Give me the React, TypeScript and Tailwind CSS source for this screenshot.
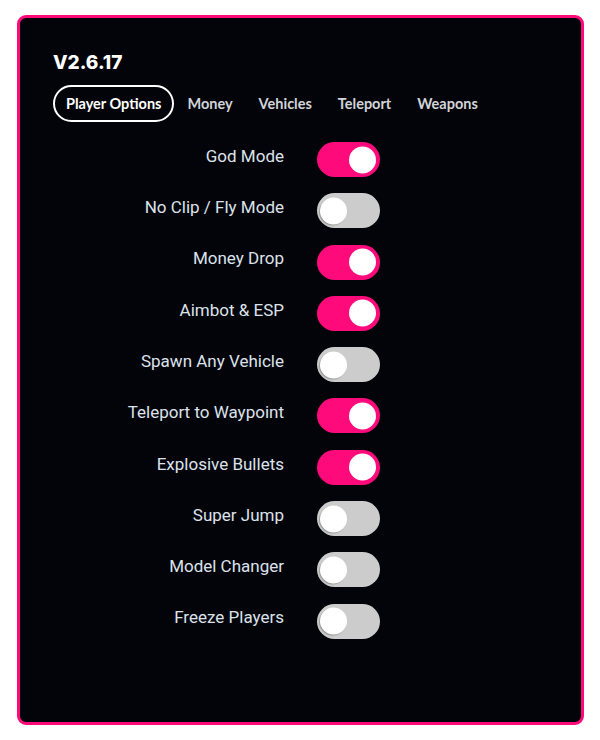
import { FC, useState } from "react";

const TABS = ["Player Options", "Money", "Vehicles", "Teleport", "Weapons"];

const OPTIONS: { label: string; on: boolean }[] = [
  { label: "God Mode", on: true },
  { label: "No Clip / Fly Mode", on: false },
  { label: "Money Drop", on: true },
  { label: "Aimbot & ESP", on: true },
  { label: "Spawn Any Vehicle", on: false },
  { label: "Teleport to Waypoint", on: true },
  { label: "Explosive Bullets", on: true },
  { label: "Super Jump", on: false },
  { label: "Model Changer", on: false },
  { label: "Freeze Players", on: false },
];

const Toggle: FC<{ on: boolean; onClick: () => void }> = ({ on, onClick }) => (
  <button
    onClick={onClick}
    className={`relative h-[35px] w-[63px] rounded-full ${on ? "bg-[#ff0a7a]" : "bg-[#cccccc]"}`}
  >
    <span
      className={`absolute top-1/2 h-[27px] w-[27px] -translate-y-1/2 rounded-full bg-white ${
        on ? "right-[4px]" : "left-[3px] shadow-[-1px_1px_1px_rgba(0,0,0,0.25)]"
      }`}
    />
  </button>
);

const App: FC = () => {
  const [tab, setTab] = useState(0);
  const [opts, setOpts] = useState(OPTIONS.map((o) => o.on));

  return (
    <div className="h-[740px] w-[600px] bg-white pt-[15px] pl-[17px]">
      <div className="h-[710px] w-[567px] rounded-[9px] border-[3px] border-[#ff0a7a] bg-[#02040a] px-[33px] pt-[33px]">
        <h1 className="font-['Inter',sans-serif] text-[19px] leading-[24px] font-extrabold text-white">
          V2.6.17
        </h1>
        <div className="mt-[10px] flex font-['Lato',sans-serif] text-[14.5px] font-bold">
          {TABS.map((t, i) => (
            <button
              key={t}
              onClick={() => setTab(i)}
              className={`h-[37px] rounded-full border-2 px-[11px] ${
                tab === i ? "border-white text-white" : "border-transparent text-[#d2d4d8]"
              }`}
            >
              {t}
            </button>
          ))}
        </div>
        <div className="mt-[20px] grid grid-cols-2 gap-x-[33px] gap-y-[16.3px] font-['Roboto',sans-serif] text-[17px] text-[#dde2ea]">
          {OPTIONS.map((o, i) => (
            <div key={o.label} className="contents">
              <div className="flex h-[35px] items-center justify-end pb-[6px]">{o.label}</div>
              <div className="flex items-center">
                <Toggle
                  on={opts[i]}
                  onClick={() => setOpts(opts.map((v, j) => (j === i ? !v : v)))}
                />
              </div>
            </div>
          ))}
        </div>
      </div>
    </div>
  );
};

export default App;
